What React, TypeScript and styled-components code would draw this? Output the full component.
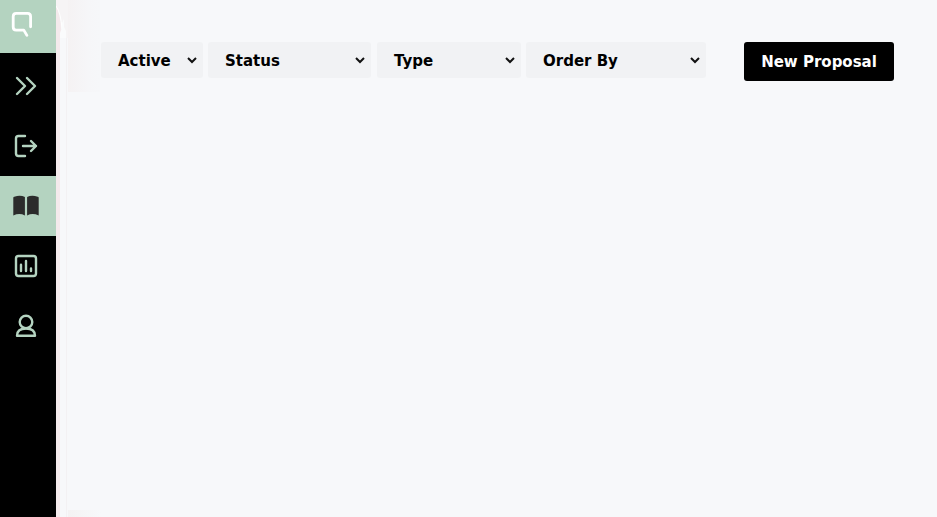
import React from "react";
import styled, { createGlobalStyle } from "styled-components";

const GlobalStyle = createGlobalStyle`
  * { box-sizing: border-box; }
  html, body, #root { height: 100%; }
  body { margin: 0; overflow: hidden; background: #f7f8fa; font-family: "DejaVu Sans", Verdana, sans-serif; }
`;

const Page = styled.div`
  display: flex;
  height: 100vh;
`;

const Sidebar = styled.nav`
  display: flex;
  flex-direction: column;
  flex: 0 0 56px;
  background: #000;
`;

const Logo = styled.a`
  height: 53px;
  margin-bottom: 3px;
  background: #b4d3c0;
`;

const NavItem = styled.a<{ $active?: boolean }>`
  height: 60px;
  color: ${(p) => (p.$active ? "#2b2b2b" : "#b4d3c0")};
  background: ${(p) => (p.$active ? "#b4d3c0" : "transparent")};
`;

const Icon = styled.svg<{ $weight?: number }>`
  display: block;
  fill: none;
  stroke: currentColor;
  stroke-width: ${(p) => p.$weight ?? 2.4};
  stroke-linecap: round;
  stroke-linejoin: round;
`;

const ChevronIcon = styled.svg`
  display: block;
  fill: none;
  stroke: #111;
  stroke-width: 2;
`;

const Edge = styled.div`
  flex: 0 0 12px;
  background: linear-gradient(90deg, #f4eaec 4px, #f7f8fa 4px, #f7f8fa 10px, #f3f1f3 10px, #f3f1f3 11px, #f7f8fa 11px);
`;

const EdgeTop = styled.svg`
  display: block;
`;

const Main = styled.main`
  display: flex;
  flex-direction: column;
  justify-content: space-between;
  flex: 1;
  background: #f7f8fa;
`;

const Header = styled.header`
  display: flex;
  align-items: flex-start;
  height: 92px;
  padding: 42px 0 0 33px;
  background: linear-gradient(90deg, #f5f2f3 0, #f6f6f8 20px, #f6f7f9 32px, #f7f8fa 32px);
`;

const Footer = styled.div`
  width: 33px;
  height: 7px;
  background: linear-gradient(90deg, #f4f2f3, #f7f8fa);
`;

const Filter = styled.button<{ $width: number; $gap: number }>`
  display: flex;
  align-items: center;
  justify-content: space-between;
  width: ${(p) => p.$width}px;
  height: 36px;
  margin-right: ${(p) => p.$gap}px;
  padding: 0 4px 0 17px;
  border: 0;
  border-radius: 3px;
  background: #f1f2f4;
  color: #000;
  font: bold 15px/36px "DejaVu Sans", Verdana, sans-serif;
  white-space: nowrap;
`;

const FilterLabel = styled.span`
  padding-top: 2px;
  line-height: 34px;
`;

const Primary = styled.button`
  width: 150px;
  height: 39px;
  padding: 2px 0 0;
  border: 0;
  border-radius: 3px;
  background: #000;
  color: #fff;
  font: bold 15px/37px "DejaVu Sans", Verdana, sans-serif;
  white-space: nowrap;
`;

const filters = [
  { label: "Active", width: 102, gap: 5 },
  { label: "Status", width: 163, gap: 6 },
  { label: "Type", width: 144, gap: 5 },
  { label: "Order By", width: 180, gap: 38 },
];

const Chevron = () => (
  <ChevronIcon width="14" height="14" viewBox="0 0 14 14">
    <path d="M3 5L7 9L11 5" />
  </ChevronIcon>
);

export default function App() {
  return (
    <Page>
      <GlobalStyle />
      <Sidebar>
        <Logo>
          <Icon $weight={2.8} width="56" height="53" viewBox="0 0 56 53" color="#fff">
            <path d="M30.6 26.8V16.4Q30.6 13.3 27.6 13.3H16.2Q13.2 13.3 13.2 16.4V27Q13.2 30.1 16.2 30.1H23.8L26.9 35.4" />
          </Icon>
        </Logo>
        <NavItem>
          <Icon width="56" height="60" viewBox="0 0 56 60">
            <path d="M17 22L25 30L17 38M27 22L35 30L27 38" />
          </Icon>
        </NavItem>
        <NavItem>
          <Icon width="56" height="60" viewBox="0 0 56 60">
            <path d="M25 20H18.5Q16 20 16 22.5V37.5Q16 40 18.5 40H25M23 30H36M31 25L36 30L31 35" />
          </Icon>
        </NavItem>
        <NavItem $active>
          <Icon $weight={0} width="56" height="60" viewBox="0 0 56 60">
            <path
              fill="currentColor"
              d="M13.3 21.8Q13.3 20.9 14.3 20.7Q20.5 18.7 24.9 21.1V39.4Q19.5 36.6 13.3 39.4ZM27.1 21.1Q31.5 18.7 37.7 20.7Q38.7 20.9 38.7 21.8V39.4Q32.5 36.6 27.1 39.4Z"
            />
          </Icon>
        </NavItem>
        <NavItem>
          <Icon width="56" height="60" viewBox="0 0 56 60">
            <rect x="16" y="20" width="20" height="20" rx="2.5" />
            <path d="M21 28.8V35M26 25V35M31 32.5V35" />
          </Icon>
        </NavItem>
        <NavItem>
          <Icon width="56" height="60" viewBox="0 0 56 60">
            <circle cx="26" cy="26" r="6.3" />
            <path d="M17 39.8C17 35 20.2 32.5 26 32.5S35 35 35 39.8Z" />
          </Icon>
        </NavItem>
      </Sidebar>
      <Edge>
        <EdgeTop width="12" height="38" viewBox="0 0 12 38">
          <path d="M0 0H12V38H0Z" fill="#f6f4f5" />
          <path d="M0 6Q4 13 5 29L4 38H0Z" fill="#f4eaec" />
          <path d="M0 6Q5 13 6 29" fill="none" stroke="#fff" />
          <path d="M4 38V33L6 28V23L8 19V27L10 31V38Z" fill="#fafbfc" />
        </EdgeTop>
      </Edge>
      <Main>
        <Header>
          {filters.map((f) => (
            <Filter key={f.label} $width={f.width} $gap={f.gap}>
              <FilterLabel>{f.label}</FilterLabel>
              <Chevron />
            </Filter>
          ))}
          <Primary>New Proposal</Primary>
        </Header>
        <Footer />
      </Main>
    </Page>
  );
}
